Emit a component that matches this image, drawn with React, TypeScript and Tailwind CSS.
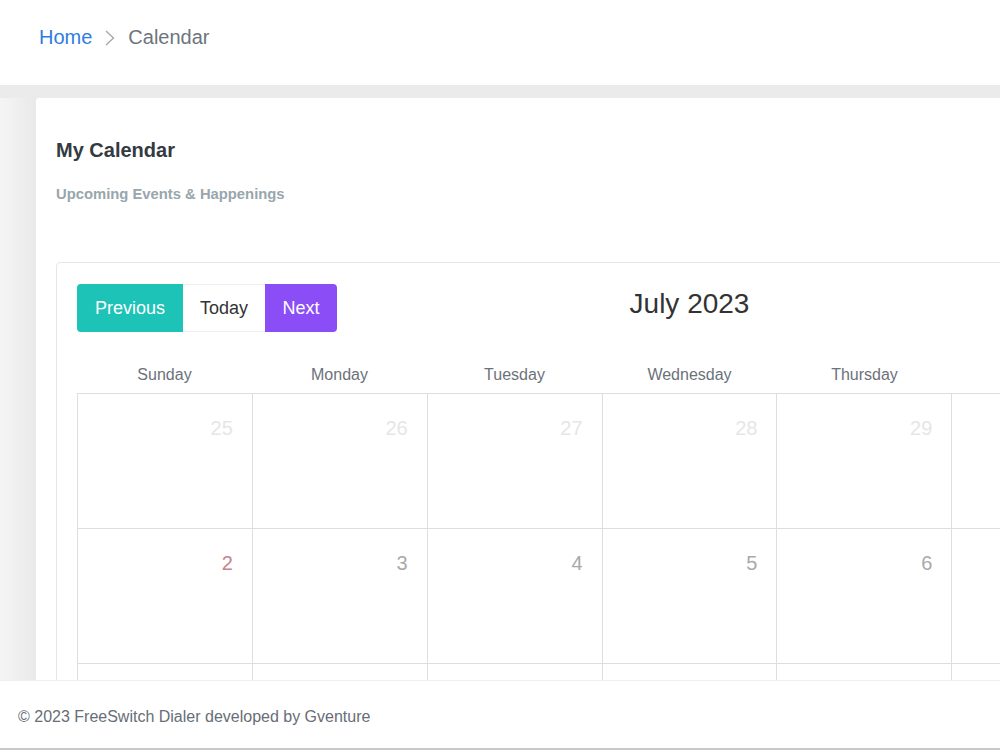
const DAYS = ["Sunday", "Monday", "Tuesday", "Wednesday", "Thursday", "Friday", "Saturday"];

const WEEKS: { n: number; cur: boolean }[][] = [
  [25, 26, 27, 28, 29, 30].map((n) => ({ n, cur: false })).concat([{ n: 1, cur: true }]),
  [2, 3, 4, 5, 6, 7, 8].map((n) => ({ n, cur: true })),
  [9, 10, 11, 12, 13, 14, 15].map((n) => ({ n, cur: true })),
];

function dayColor(d: { n: number; cur: boolean }, i: number) {
  if (!d.cur) return "text-[#e6e6e6]";
  if (i === 0) return "text-[#c4848b]";
  return "text-[#a9a9a9]";
}

function Breadcrumb() {
  return (
    <div className="h-[85px] bg-white flex items-center pl-[39px] pb-[11px] text-[20px]">
      <a className="text-[#2f7de1]">Home</a>
      <svg width="12" height="16" viewBox="0 0 12 16" className="mx-[12px] mt-[1px]">
        <path d="M2 1l7.5 7L2 15" fill="none" stroke="#a9a9a9" strokeWidth="1.4" />
      </svg>
      <span className="text-[#6c757d]">Calendar</span>
    </div>
  );
}

export default function App() {
  return (
    <div className="relative w-[1000px] h-[750px] overflow-hidden bg-[#ebebeb] font-['Liberation_Sans',Arial,sans-serif]">
      <Breadcrumb />

      <div className="flex pt-[13px]">
        <div className="w-[36px] shrink-0 h-[700px] bg-gradient-to-r from-[#f5f5f5] to-[#e9e9e9]" />
        <div className="w-[1300px] shrink-0 bg-white rounded-tl-[3px] px-5 pt-[40px]">
          <h4 className="text-[20px] leading-[24px] font-bold text-[#343a40]">My Calendar</h4>
          <p className="mt-[22px] text-[14.8px] leading-[20px] font-bold text-[#98a6ad]">Upcoming Events &amp; Happenings</p>

          <div className="mt-[58px] border border-[#e6e6e6] rounded-tl-[4px] pt-[21px] pl-[20px]">
            <div className="w-[1225px] relative flex items-center h-[48px]">
              <div className="flex h-[48px] text-[18px]">
                <button className="w-[106px] bg-[#1ec3b8] text-white rounded-l-[4px]">Previous</button>
                <button className="w-[82px] bg-white text-[#333] border-y border-[#eeeeee]">Today</button>
                <button className="w-[72px] bg-[#8b4df6] text-white rounded-r-[4px]">Next</button>
              </div>
              <h2 className="absolute left-0 right-0 text-center top-[3px] text-[28px] leading-[34px] text-[#333] pointer-events-none">July 2023</h2>
            </div>

            <div className="w-[1225px] mt-[24px]">
              <div className="grid grid-cols-7 h-[37px] items-center text-[16px] text-[#6c727a]">
                {DAYS.map((d) => (
                  <div key={d} className="text-center">{d}</div>
                ))}
              </div>
              <div className="border-l border-t border-[#dedede]">
                {WEEKS.map((w, wi) => (
                  <div key={wi} className="grid grid-cols-7 h-[135px]">
                    {w.map((d, i) => (
                      <div key={i} className="border-r border-b border-[#dedede] pt-[22px] pr-[19px] text-right">
                        <span className={`text-[20px] leading-[24px] ${dayColor(d, i)}`}>{d.n}</span>
                      </div>
                    ))}
                  </div>
                ))}
              </div>
            </div>
          </div>
        </div>
      </div>

      <footer className="absolute left-0 right-0 bottom-0 h-[70px] bg-white border-t border-[#f0f0f0] border-b-2 border-b-[#c8c8c8] flex items-center pl-[18px] pt-[4px] text-[16px] text-[#676e76]">
        © 2023 FreeSwitch Dialer developed by Gventure
      </footer>
    </div>
  );
}
